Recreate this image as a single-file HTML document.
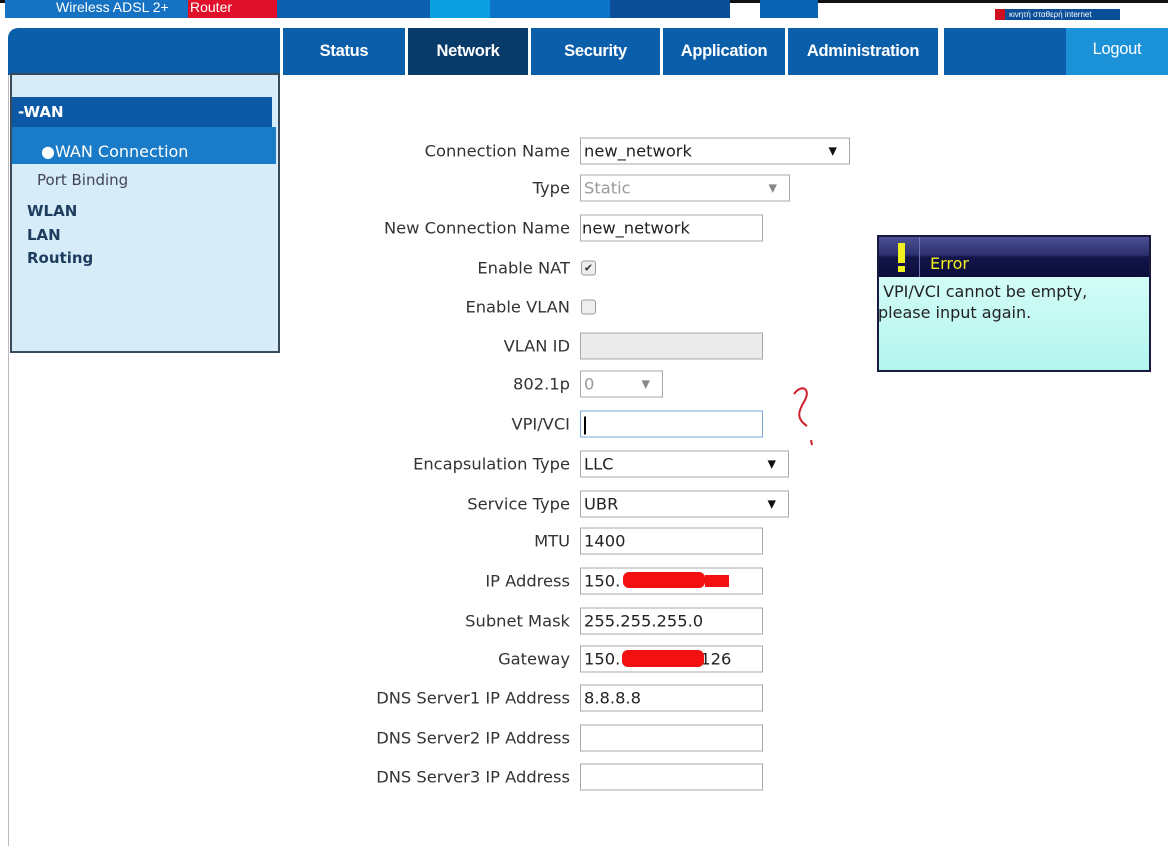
<!DOCTYPE html>
<html><head><meta charset="utf-8"><style>
*{box-sizing:border-box;margin:0;padding:0}
body{width:1168px;height:846px;background:#fff;position:relative;overflow:hidden;font-family:"DejaVu Sans",Verdana,sans-serif;}
.a{position:absolute}
.nav{position:absolute;top:28px;height:47px;color:#fff;font:bold 16.5px "Liberation Sans",sans-serif;display:flex;align-items:center;justify-content:center;letter-spacing:-0.3px}
.lbl{position:absolute;right:598px;font-size:16.3px;color:#333;white-space:nowrap;transform:translateY(-50%)}
.in{position:absolute;left:580px;height:27px;border:1px solid #a9a9a9;background:#fff;font-size:16.3px;color:#222;padding-left:3px;line-height:25px;transform:translateY(-50%)}
.sel::after{content:"▼";position:absolute;right:12px;top:0;font-size:11px;color:#111}
.dis{color:#999}
.dis::after{color:#888}
.cb{position:absolute;left:581px;width:15px;height:15px;border:1px solid #999;border-radius:3px;background:#eee;transform:translateY(-50%)}
</style></head><body>
<div class="a" style="left:0;top:0;width:1168px;height:3px;background:#111"></div>
<div class="a" style="left:5px;top:0;width:183px;height:18px;background:#1673c4;color:#fff;font:14px 'Liberation Sans',sans-serif;padding-left:51px;line-height:14px">Wireless ADSL 2+</div>
<div class="a" style="left:188px;top:0;width:89px;height:18px;background:#e0102a;color:#fff;font:14px 'Liberation Sans',sans-serif;padding-left:2px;line-height:14px">Router</div>
<div class="a" style="left:277px;top:0;width:153px;height:18px;background:#0d5fb0"></div>
<div class="a" style="left:430px;top:0;width:60px;height:18px;background:#0aa0e0"></div>
<div class="a" style="left:490px;top:0;width:120px;height:18px;background:#0b74c8"></div>
<div class="a" style="left:610px;top:0;width:120px;height:18px;background:#0a4e98"></div>
<div class="a" style="left:760px;top:0;width:58px;height:18px;background:#0b63b4"></div>
<div class="a" style="left:995px;top:9px;width:10px;height:11px;background:#d01020"></div>
<div class="a" style="left:1005px;top:9px;width:115px;height:11px;background:#0a4e98;color:#fff;font:8px 'Liberation Sans',sans-serif;line-height:11px;padding-left:4px">κινητή σταθερή internet</div>
<div class="nav" style="left:8px;width:272px;background:#0b5ea9;border-top-left-radius:10px"></div>
<div class="nav" style="left:283px;width:122px;background:#0b5ea9">Status</div>
<div class="nav" style="left:408px;width:120px;background:#083a6a">Network</div>
<div class="nav" style="left:531px;width:129px;background:#0b5ea9">Security</div>
<div class="nav" style="left:663px;width:122px;background:#0b5ea9">Application</div>
<div class="nav" style="left:788px;width:150px;background:#0b5ea9">Administration</div>
<div class="nav" style="left:944px;width:122px;background:#0b5ea9"></div>
<div class="nav" style="left:1066px;width:102px;background:#1b92d8;align-items:flex-start;padding-top:12px;font-weight:normal">Logout</div>
<div class="a" style="left:8px;top:75px;width:1px;height:771px;background:#bbb"></div>
<div class="a" style="left:10px;top:73px;width:270px;height:280px;background:#d6ecf9;border:2px solid #3a4a5a"></div>
<div class="a" style="left:12px;top:97px;width:260px;height:31px;background:#0b59a6;color:#fff;font-weight:bold;font-size:15px;line-height:31px;padding-left:6px">-WAN</div>
<div class="a" style="left:12px;top:127px;width:264px;height:37px;background:#1a7cc8;color:#fff;font-size:16px;padding:16px 0 0 29px;line-height:18px">●WAN Connection</div>
<div class="a" style="left:37px;top:171px;font-size:15px;color:#445">Port Binding</div>
<div class="a" style="left:27px;top:200px;font-size:15px;font-weight:bold;color:#1d3c5e;line-height:23.5px">WLAN<br>LAN<br>Routing</div>

<div class="lbl" style="top:151px">Connection Name</div><div class="in sel" style="top:151px;width:270px">new_network</div>
<div class="lbl" style="top:188px">Type</div><div class="in sel dis" style="top:188px;width:210px">Static</div>
<div class="lbl" style="top:228px">New Connection Name</div><div class="in" style="top:228px;width:183px;padding-left:1px">new_network</div>
<div class="lbl" style="top:268px">Enable NAT</div><div class="cb" style="top:268px;font-size:11px;line-height:13px;text-align:center;color:#333">✔</div>
<div class="lbl" style="top:307px">Enable VLAN</div><div class="cb" style="top:307px"></div>
<div class="lbl" style="top:346px">VLAN ID</div><div class="in" style="top:346px;width:183px;background:#ebebeb"></div>
<div class="lbl" style="top:384px">802.1p</div><div class="in sel dis" style="top:384px;width:83px">0</div>
<div class="lbl" style="top:424px">VPI/VCI</div><div class="in" style="top:424px;width:183px;border-color:#7aa7d8"><span style="display:inline-block;width:2px;height:18px;background:#000;vertical-align:middle"></span></div>
<div class="lbl" style="top:464px">Encapsulation Type</div><div class="in sel" style="top:464px;width:209px">LLC</div>
<div class="lbl" style="top:504px">Service Type</div><div class="in sel" style="top:504px;width:209px">UBR</div>
<div class="lbl" style="top:541px">MTU</div><div class="in" style="top:541px;width:183px">1400</div>
<div class="lbl" style="top:581px">IP Address</div><div class="in" style="top:581px;width:183px">150.</div>
<div class="a" style="left:623px;top:572px;width:82px;height:16px;background:#f21010;border-radius:6px"></div>
<div class="a" style="left:705px;top:575px;width:24px;height:12px;background:#f21010"></div>
<div class="lbl" style="top:621px">Subnet Mask</div><div class="in" style="top:621px;width:183px">255.255.255.0</div>
<div class="lbl" style="top:659px">Gateway</div><div class="in" style="top:659px;width:183px">150.<span style="padding-left:80px">126</span></div>
<div class="a" style="left:622px;top:650px;width:82px;height:17px;background:#f21010;border-radius:6px"></div>
<div class="lbl" style="top:698px">DNS Server1 IP Address</div><div class="in" style="top:698px;width:183px">8.8.8.8</div>
<div class="lbl" style="top:738px">DNS Server2 IP Address</div><div class="in" style="top:738px;width:183px"></div>
<div class="lbl" style="top:777px">DNS Server3 IP Address</div><div class="in" style="top:777px;width:183px"></div>

<svg class="a" style="left:785px;top:380px" width="40" height="70"><path d="M9 14 C16 4 26 8 20 20 C14 30 10 38 22 46" stroke="#d0202a" stroke-width="2" fill="none"/><path d="M26 60 l1 5" stroke="#d0202a" stroke-width="2"/></svg>

<div class="a" style="left:877px;top:235px;width:274px;height:137px;border:2px solid #1a1a40;background:linear-gradient(#e2fffb,#b2f5ee)"></div>
<div class="a" style="left:879px;top:237px;width:270px;height:40px;background:linear-gradient(#4a4f92 0%,#2c306e 45%,#14164a 50%,#0a0c3a 100%)"></div>
<div class="a" style="left:919px;top:237px;width:1px;height:40px;background:#6a70b0"></div>
<div class="a" style="left:898px;top:243px;width:7px;height:20px;background:#f0f020"></div>
<div class="a" style="left:898px;top:266px;width:7px;height:6px;background:#f0f020"></div>
<div class="a" style="left:930px;top:254px;color:#f0f020;font-size:16px">Error</div>
<div class="a" style="left:878px;top:281px;color:#222;font-size:16px;line-height:21px">&nbsp;VPI/VCI cannot be empty,<br>please input again.</div>
</body></html>
